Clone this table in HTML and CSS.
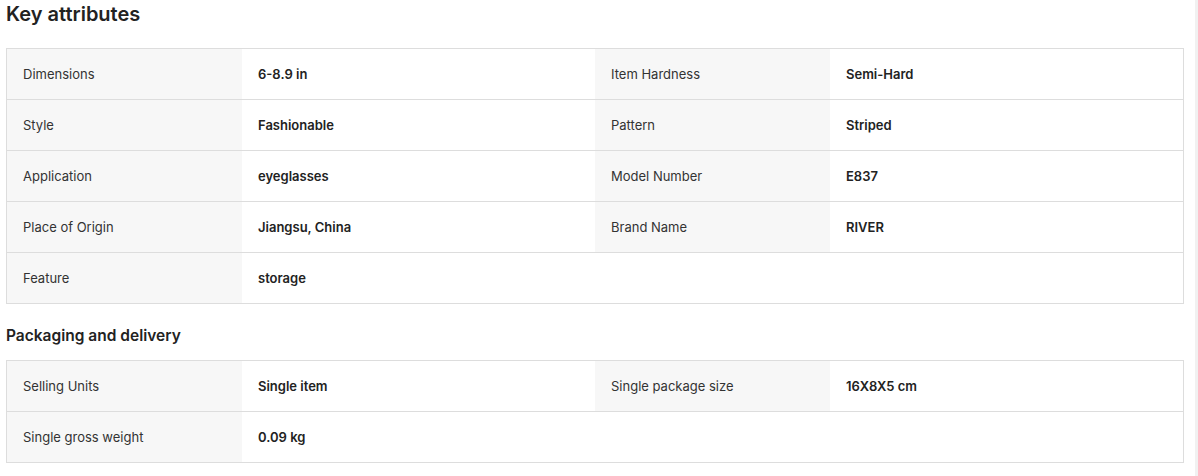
FILE: index.html
```html
<!DOCTYPE html>
<html lang="en">
<head>
<meta charset="utf-8">
<title>Key attributes</title>
<link rel="stylesheet" href="styles.css">
</head>
<body>
<div class="page">
  <h2 class="title">Key attributes</h2>
  <div class="attr-table">
    <div class="attr-row">
      <div class="cell label">Dimensions</div>
      <div class="cell value">6-8.9 in</div>
      <div class="cell label">Item Hardness</div>
      <div class="cell value">Semi-Hard</div>
    </div>
    <div class="attr-row">
      <div class="cell label">Style</div>
      <div class="cell value">Fashionable</div>
      <div class="cell label">Pattern</div>
      <div class="cell value">Striped</div>
    </div>
    <div class="attr-row">
      <div class="cell label">Application</div>
      <div class="cell value">eyeglasses</div>
      <div class="cell label">Model Number</div>
      <div class="cell value">E837</div>
    </div>
    <div class="attr-row">
      <div class="cell label">Place of Origin</div>
      <div class="cell value">Jiangsu, China</div>
      <div class="cell label">Brand Name</div>
      <div class="cell value">RIVER</div>
    </div>
    <div class="attr-row">
      <div class="cell label">Feature</div>
      <div class="cell value">storage</div>
    </div>
  </div>

  <h3 class="subtitle">Packaging and delivery</h3>
  <div class="attr-table">
    <div class="attr-row">
      <div class="cell label">Selling Units</div>
      <div class="cell value">Single item</div>
      <div class="cell label">Single package size</div>
      <div class="cell value">16X8X5 cm</div>
    </div>
    <div class="attr-row">
      <div class="cell label">Single gross weight</div>
      <div class="cell value">0.09 kg</div>
    </div>
  </div>
</div>
<div class="scroll-strip"></div>
</body>
</html>
```
FILE: styles.css
```css
html, body {
  margin: 0;
  padding: 0;
  background: #ffffff;
}

body {
  font-family: Inter, "Noto Sans", "Liberation Sans", sans-serif;
  color: #222222;
}

.page {
  padding: 0 14px 0 6px;
}

.title {
  margin: 0 0 20px 0;
  font-size: 20px;
  line-height: 28px;
  font-weight: 600;
  color: #222222;
}

.subtitle {
  margin: 20px 0 12px 0;
  font-size: 15.5px;
  line-height: 24px;
  font-weight: 600;
  color: #222222;
}

.attr-table {
  border: 1px solid #dddddd;
  width: 1176px;
}

.attr-row {
  display: grid;
  grid-template-columns: 235px 353px 235px 353px;
  height: 50px;
  border-bottom: 1px solid #dddddd;
}

.attr-row:last-child {
  border-bottom: none;
}

.cell {
  display: flex;
  align-items: center;
  padding: 0 16px;
  font-size: 13px;
  line-height: 20px;
}

.label {
  background: #f7f7f7;
  color: #333333;
  font-weight: 400;
}

.value {
  background: #ffffff;
  color: #222222;
  font-weight: 600;
}

.scroll-strip {
  position: fixed;
  top: 0;
  right: 0;
  width: 3px;
  height: 100%;
  background: #f1f1f1;
}
```
